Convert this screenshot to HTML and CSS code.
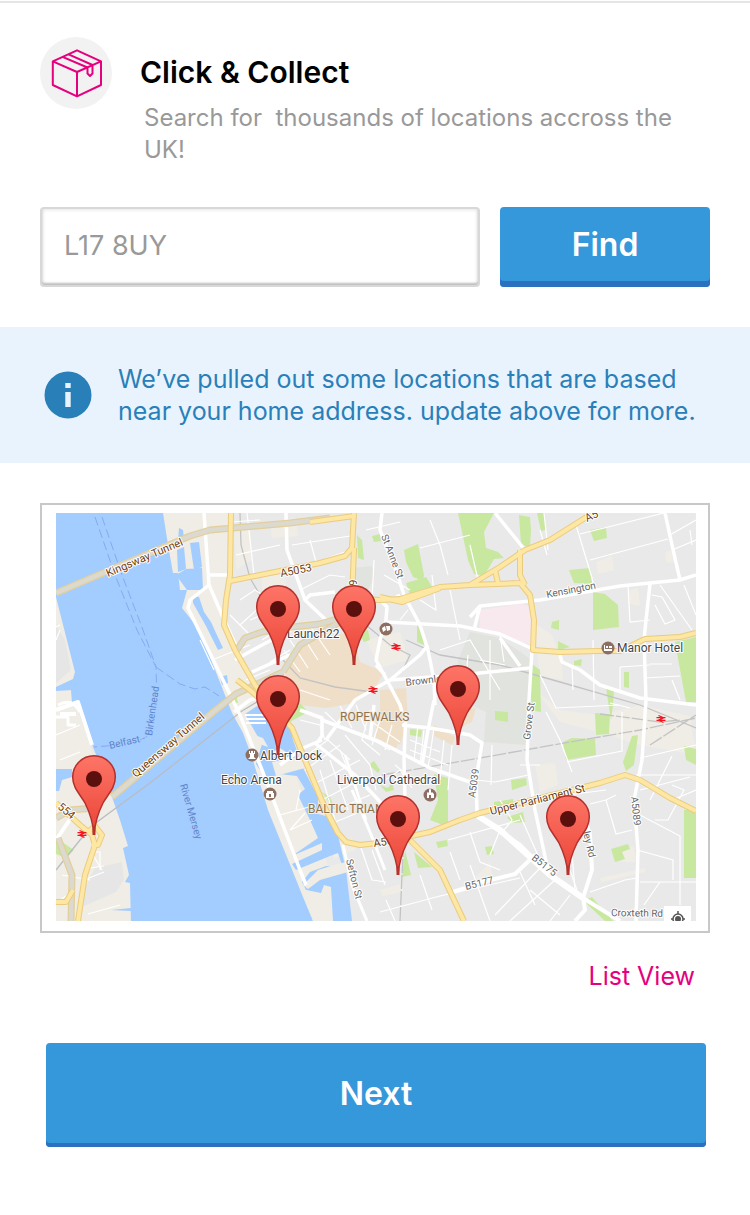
FILE: index.html
```html
<!DOCTYPE html>
<html lang="en">
<head>
<meta charset="utf-8">
<meta name="viewport" content="width=device-width, initial-scale=1">
<title>Click &amp; Collect</title>
<link rel="stylesheet" href="styles.css">
</head>
<body>
<main class="page">
  <header class="intro">
    <span class="intro-icon">
      <svg viewBox="0 0 72 72" aria-hidden="true">
        <path d="M12.800 24.300 37 13.300 61 24.300V48L37 59.300 12.800 48ZM12.800 24.300 37 35 61 24.300M37 35V59.300M22.500 19.800 47.500 30.500M28 17.200 52.500 28M47.500 30.500V36.500L50 39 52.500 36.500V28"/>
      </svg>
    </span>
    <div class="intro-text">
      <h1>Click &amp; Collect</h1>
      <p>Search for&nbsp; thousands of locations accross the UK!</p>
    </div>
  </header>

  <form class="search">
    <input type="text" aria-label="Postcode" placeholder="L17 8UY">
    <button type="button" class="btn btn-find">Find</button>
  </form>

  <section class="notice">
    <svg class="notice-icon" viewBox="0 0 48 48" aria-hidden="true">
      <circle cx="24" cy="24" r="23.500"/>
      <path d="M21.300 12h5.400v5h-5.400zM21.300 21h5.400v15h-5.400z"/>
    </svg>
    <p>We’ve pulled out some locations that are based near your home address. update above for more.</p>
  </section>

  <section class="map-card">
    <svg class="map" viewBox="56 513 640 408" role="img" aria-label="Map of collection points in Liverpool">
      <defs>
        <linearGradient id="pinFill" x1="0" y1="0" x2="0" y2="1">
          <stop offset="0" stop-color="#fd7567"/>
          <stop offset="1" stop-color="#ea4335"/>
        </linearGradient>
        <g id="pin">
          <path d="M0 0C-1-14-4-22-9-32-14-41-21.300-47-21.300-58A21.300 21.300 0 0 1 21.300-58C21.300-47 14-41 9-32 4-22 1-14 0 0Z" fill="url(#pinFill)" stroke="#b3302c" stroke-width="1.500"/>
          <path d="M-1.500 0V-9H1.500V0Z" fill="#b8322d"/>
          <circle cy="-56" r="8" fill="#5c100e"/>
        </g>
        <g id="rail" fill="none" stroke="#f5141e" stroke-width="1.300">
          <path d="M-4.500-1.300H4.500M-4.500 1.300H4.500M-2.500-3.500 2.500-1.300-2.500 1.300 2.500 3.500"/>
        </g>
      </defs>

      <rect x="56" y="513" width="640" height="408" fill="#e9e9e9"/>

      <!-- built-up and shoreline areas -->
      <g fill="#efede5">
        <path d="M160 513H232L228 575 222 625 246 672 262 712 290 760 318 835 346 921H310L228 715 180 610Z"/>
        <path d="M56 597 75 672 73 679 56 687ZM56 691H71L90 745 97 762 112 797 121 822 128 846 131 921H56Z"/>
        <path d="M234 528 250 522 252 560 236 570ZM262 574 285 570 286 590 262 594ZM270 522 296 518 298 536 272 538ZM366 640 400 632 408 660 380 668ZM534 623 552 635 562 660 563 680 540 676ZM535 690 560 710 600 715 640 705 690 716 696 755 640 745 610 735 560 722ZM535 765 555 763 558 785 540 792ZM490 862 493 880 475 878ZM596 562 612 556 614 570 598 574ZM380 890 400 884 404 892 382 896ZM600 878 645 868 645 872 602 882ZM330 845 352 838 356 850 334 858ZM616 850 634 846 636 862 622 862ZM629 590 638 588 640 606 628 604ZM665 552 675 549 676 563 666 562Z"/>
      </g>
      <path fill="#e6e6e6" d="M56 625 65 640 71 670 56 683ZM95 868 122 862 124 880 116 892 84 906 80 898Z"/>
      <path fill="#e1e3de" d="M470 632 500 638 532 660 530 705 528 745 484 742 486 712 460 700 458 660ZM352 568 372 566 374 578 362 602 352 600Z"/>
      <path fill="#f0dfc8" d="M318 638 352 632 360 662 384 672 374 690 350 704 326 708 296 705 288 680 283 665 300 648ZM380 690 406 688 408 720 400 745 380 730ZM376 722 402 735 396 748 376 738ZM434 725 455 737 452 745 434 736ZM460 710 476 708 472 722 460 728Z"/>
      <path fill="#f8e9ef" d="M480 610 520 604 530 606 532 645 505 638 480 630Z"/>

      <g fill="#c8e8a0">
        <path d="M458 513H494L484 532 486 548 498 552 504 558 494 559 484 576 474 574 468 560Z"/>
        <path d="M519 515 530 517 531 530 530 547 521 545ZM537 513H544L546 530 541 531ZM590 530 606 527 607 538 594 541ZM569 570 590 568 592 584 574 583ZM593 592 605 594 618 605 619 627 593 630ZM675 642 696 637V702L686 702ZM624 672H629V688L624 687ZM606 688 614 690 613 705 611 720ZM532 664 540 670 541 712 528 710ZM552 622 559 620V630L551 628ZM574 661 582 659 581 666 574 665ZM558 641 570 647 558 650Z"/>
        <path d="M404 550 418 544 424 575 423 581 413 577 406 562ZM406 583 426 577 434 590 410 595ZM372 536 380 534 381 541 374 542ZM357 535 362 540 364 560 358 558ZM417 625 423 632 424 645 417 642ZM357 630 368 630 370 640 364 642Z"/>
        <path d="M563 742 572 738 595 739 596 755 566 760ZM595 713 610 714 609 734 596 735ZM495 711 508 712 508 722 495 720ZM632 736 638 735 634 765 626 771 623 762ZM511 780 526 778 527 785 512 790ZM494 802 513 799 513 806 494 808ZM507 817 523 812 525 822 512 823ZM684 746 696 749V765L686 760ZM684 810H696V878H684ZM611 849 628 844 630 849 622 852 625 859 615 862ZM585 900 592 897 596 902 613 921H605L588 905ZM485 847 492 846 494 854 487 855Z"/>
        <path d="M410 729 422 730 421 737 410 735ZM369 765 374 761 380 770 378 773ZM380 785 388 788 392 782 394 790 386 792ZM434 774 448 778 448 827 430 820 438 800ZM405 850 411 875 402 877ZM414 852 426 862 432 867 418 868ZM436 842 447 840 448 846 438 848ZM322 792 330 797 336 812ZM284 712 300 703 308 712 290 722Z"/>
        <path d="M56 838 74 850 66 858 56 854ZM230 694 236 694 238 703 232 703Z"/>
      </g>

      <!-- river and docks -->
      <g fill="#a3ccff">
        <path d="M56 513H163L168 545 173 573 178 573 180 590 187 590 182 608 190 618 200 632 212 662 232 713 243 733 252 757 268 810 297 882 303 897 313 921H131L130 883 125 882 129 875 123 848 128 846 120 820 112 797 97 757 93 747 81 710 72 703 71 690 56 691V687L73 679 75 672 56 597Z"/>
        <path d="M56 769H72L72 777 62 780 59 791 56 791ZM111 910 131 908V911Z"/>
        <path d="M179 528 183 530 184 540 178 543ZM177 550 184 547 186 569 178 572ZM190 543 199 542 202 567 194 570ZM176 575 186 569 202 568 203 590 187 590ZM193 596 199 597 204 612 211 622 215 631 223 648 218 650 206 626 193 603ZM220 677 227 675 228 683 222 685Z"/>
        <path d="M245 714 260 704 286 707 293 740 304 770 318 797 318 814 334 818 346 870 352 921H333L328 896 306 890 302 882 310 872 326 866 343 868 338 853 330 856 296 870 292 864 322 850 322 843 292 856 318 838 310 820 298 795 305 789 297 776 280 774 266 779 256 764 262 744Z"/>
      </g>
      <g fill="#efede5">
        <path d="M247 732 263 738 268 747 247 740ZM272 762 303 756 305 768 276 776ZM334 865 346 862 348 872 320 880 308 889 303 885 318 870ZM272 752 280 748 286 752 276 760Z"/>
        <path d="M306 890 321 893 324 885 331 887 333 921H313Z"/>
      </g>
      <path d="M245 715H266M246 719H266M246 723H266" stroke="#fff" stroke-width="2"/>

      <!-- ferry lines -->
      <g fill="none" stroke="#87a9f2" stroke-dasharray="9 4">
        <path d="M95 517 115 575 137 630 156 667 157 700 150 735 132 744 94 747M102 517 122 575 143 630 156 667M156 667 180 684 195 689 205 687 219 696"/>
      </g>

      <!-- railways -->
      <g fill="none" stroke="#c3c3c3" stroke-width="1.300">
        <path d="M56 870 80 840 97 822 150 783 242 711 270 694" stroke="#b9bcc2"/>
        <path d="M240 513 241 545 250 578 260 595 283 615M283 660 300 678 335 687 372 692M360 620 390 645 410 655 402 672M406 640 440 655 500 665 560 682 640 705 696 728"/>
        <path d="M382 775 480 758 570 742 640 730 696 718M400 921 402 875 404 840M600 714 660 722 680 720M650 745 696 715" stroke-dasharray="14 2"/>
      </g>

      <!-- minor streets -->
      <g fill="none" stroke="#fff" stroke-width="1.200">
        <path d="M230 522 260 520M247 513 254 575M236 555 280 545M292 545 350 536M310 540 316 562M300 590 330 575 345 577M262 594 285 590M240 600 255 590 270 600M230 615 250 635M240 625 262 605M318 522 350 515M322 560 345 552"/>
        <path d="M366 530 400 522M420 548 470 535M430 520 440 545 448 575M374 560 372 600M384 575 410 590M420 600 436 610 432 575M450 590 460 640M400 620 408 610"/>
        <path d="M576 525 592 578 594 587M580 534 664 513M590 560 668 539M668 536 696 520M672 550 696 540M690 530 692 545M684 585 696 615M660 585 692 630M628 586 630 622 650 620M652 595 662 597 675 620 665 624 655 605M630 708 610 703M650 664 672 664M620 667 650 665M620 667V690M672 680 680 700M645 678 680 676M593 640 594 700M572 665 573 690M540 675 556 708 620 705M540 530 547 555M544 513 548 550M470 545 478 580"/>
        <path d="M468 655 465 690M480 660 505 665M490 640 490 700M500 635 504 662M440 650 470 640 500 690M546 712 560 740 572 772M622 712V751L567 762M640 758 696 745M492 745 491 785M475 780 495 782 528 775M520 765 540 765M636 775 696 775M650 800 672 756M696 790 672 800M606 800 616 834 632 830M616 795 606 800 590 804M640 815 680 836 680 905M637 850 673 860V880M640 882H696M660 882 644 905M590 892 625 880 637 878M570 870 577 890M640 790 690 777M655 820 668 820 684 790 672 785"/>
        <path d="M300 760 328 740 350 760M305 770 340 745M312 785 360 760M322 800 360 780M330 812 370 795M335 822 370 808M320 770 335 820M330 760 348 810M340 750 360 800M345 735 370 765 376 790M300 720 320 725 325 740M325 712 342 728M340 706 352 728M356 705 366 730M370 710 362 740 380 755M380 720 372 745M392 725 385 750M365 735 390 750M372 722 400 742M385 780 400 770 412 788M395 765 420 785M410 740 440 752M418 725 414 760M424 730 420 765M434 728 428 768M444 740 440 780M410 750 448 765M452 745 448 790"/>
        <path d="M330 700 300 690M284 650 300 672M290 640 308 668M300 632 318 660M310 626 330 655M262 640 285 625M270 662 290 650M250 620 275 610M200 640 214 670M212 660 250 645M246 680 270 670"/>
        <path d="M360 845 372 880 386 882M372 850 385 885M380 912 440 896 520 878M386 900 395 921M420 875 432 910M450 852 460 880M448 840 520 820M470 832 480 862 500 870M490 855 500 830M520 872 535 905M530 890 560 915M540 868 495 915M555 880 510 921M570 895 550 921M470 865 490 921M520 815 540 860M570 830 575 890M528 800 606 790M500 800 512 820 500 835"/>
        <path d="M90 850 102 870M94 852H100V870M84 880 104 872M90 868 104 866M88 914 120 905M60 900 75 890M62 875 90 880M58 810 95 805M56 735 80 725M56 640 60 630M56 627 60 625M70 810 85 830M60 760 80 752M305 813 290 830 312 820M280 815 316 805M300 790 296 810"/>
      </g>

      <!-- secondary streets -->
      <g fill="none" stroke="#fff" stroke-width="3.500" stroke-linejoin="round">
        <path d="M204 513 209 585 222 615 240 655M209 585 190 600 188 608 240 715 262 770 300 870 306 885M209 575H230M286 513 287 550 305 600 326 620 340 625M305 600 310 595 335 592"/>
        <path d="M382 513 380 530 396 570 404 595 420 625 428 650 434 680 435 705M380 600 387 607 386 620 380 640 376 660 388 682 400 705 402 712M386 622 460 626 500 634 535 650M376 665 385 675M392 600 400 595"/>
        <path d="M326 740 355 700 390 680 420 655 428 645M390 680 460 675 530 668M322 740 303 748M303 748 280 765"/>
        <path d="M300 710 322 718 322 736 316 744 355 775 384 806M322 720 380 742 430 768 470 782M406 712 404 760 405 800M370 738 374 705M434 700 428 730 422 765M402 725 430 728 470 735 482 743 476 780 477 812"/>
        <path d="M352 790 370 832 385 870M343 845 352 885 367 921" stroke-width="3"/>
        <path d="M345 755 355 785 366 820" stroke-width="2.500"/>
        <path d="M470 617 480 606 540 600 620 586 680 580 696 575M480 606 474 630M650 584 646 620 644 640 646 700 642 760 634 800 638 850 636 921M665 513 672 545 680 580M532 650 529 700 527 760 535 810 549 875M560 655 562 662 580 670 600 685 640 698 696 705M500 638 520 666M495 513 525 550"/>
        <path d="M478 816 520 845 550 875 583 898 620 921M583 898 592 870 590 835 585 820M583 898 585 910 575 921M470 885 515 874 535 855M453 892 475 885M56 840 75 812M56 710 78 702 92 745M60 714H76" stroke-width="4"/>
        <path d="M478 816 500 830 550 875 583 898" stroke-width="6"/>
        <path d="M235 660 262 645 300 625M252 672 290 655M234 712 250 700 285 690"/>
        <path d="M58 705 Q72 697 80 712M56 717H68V725H76" stroke-width="3"/>
      </g>

      <!-- tunnels -->
      <g fill="none" stroke-linejoin="round">
        <path d="M56 593 190 536 210 530 290 523 330 518M112 797 212 713 236 694 283 672M237 650 245 638 262 632 283 628 320 624 340 618M283 672 300 645 340 622M56 818 70 810 95 808M58 838 72 875 71 921" stroke="#e2cf9b" stroke-width="7"/>
        <path d="M56 593 190 536 210 530 290 523 330 518M112 797 212 713 236 694 283 672M237 650 245 638 262 632 283 628 320 624 340 618M283 672 300 645 340 622M56 818 70 810 95 808M58 838 72 875 71 921" stroke="#dcd9ce" stroke-width="4.500"/>
      </g>

      <!-- main roads -->
      <g fill="none" stroke-linejoin="round">
        <g stroke="#eacb7e" stroke-width="6">
          <path d="M231 513 230 575 226 600 224 625 235 650 255 685 275 710 292 728 305 760 325 808 338 833 346 842 360 845 378 843M230 581 260 575 320 563 345 556 352 548 354 513M354 548 352 600M310 522 354 516M352 598 380 600 400 599 440 587 470 585 520 583 530 595 534 620 533 650 560 652 600 651 620 651 645 639 680 637 696 633M380 597 402 602 440 588M470 585 500 567 525 550 550 540 585 518 595 513M520 550 520 575 525 585M495 570 498 583M378 843 430 832 460 820 480 813 540 798 600 783 625 775 640 780 670 798 696 811M405 835 425 855 440 870 464 921"/>
          <path d="M56 803 80 825 92 835 95 845 85 875 78 921M88 832 95 826 102 835 98 845 92 845M56 902 66 902 73 890M237 680 250 690 270 708"/>
        </g>
        <g stroke="#fde7a3" stroke-width="4">
          <path d="M231 513 230 575 226 600 224 625 235 650 255 685 275 710 292 728 305 760 325 808 338 833 346 842 360 845 378 843M230 581 260 575 320 563 345 556 352 548 354 513M354 548 352 600M310 522 354 516M352 598 380 600 400 599 440 587 470 585 520 583 530 595 534 620 533 650 560 652 600 651 620 651 645 639 680 637 696 633M380 597 402 602 440 588M470 585 500 567 525 550 550 540 585 518 595 513M520 550 520 575 525 585M495 570 498 583M378 843 430 832 460 820 480 813 540 798 600 783 625 775 640 780 670 798 696 811M405 835 425 855 440 870 464 921"/>
          <path d="M56 803 80 825 92 835 95 845 85 875 78 921M88 832 95 826 102 835 98 845 92 845M56 902 66 902 73 890M237 680 250 690 270 708"/>
        </g>
      </g>

      <use href="#rail" x="396" y="647"/>
      <use href="#rail" x="373" y="690"/>
      <use href="#rail" x="661" y="719"/>
      <use href="#rail" x="82" y="834"/>

      <g fill="#8d6e63">
        <circle cx="386" cy="629" r="6.500"/><circle cx="608" cy="648" r="6.500"/><circle cx="252" cy="755" r="6.500"/><circle cx="270" cy="794" r="6.500"/><circle cx="430" cy="795" r="6.500"/>
      </g>
      <g fill="#fff">
        <path d="M382 628 385 626 386 630 383 632ZM386 626H390V630L387 631ZM604 645H605V649H612V651H604ZM606 646H608V648H606ZM609 646H612V648H609ZM249 751H250V753H251V751H253V753H254V751H255V754H254V757L256 759H248L250 757V754H249ZM266 793H267V791H273V793H274V798H266ZM427 797V793L428 792 429 793V790L430 788 431 790V793L432 792 434 794V798H431V795H429V798H427Z"/>
      </g>
      <path d="M270 794V797" stroke="#8d6e63" stroke-width="2"/>

      <g class="label label-place">
        <text x="287" y="638">Launch22</text>
        <text x="617" y="652">Manor Hotel</text>
        <text x="260" y="760">Albert Dock</text>
        <text x="221" y="784">Echo Arena</text>
        <text x="337" y="784">Liverpool Cathedral</text>
      </g>
      <g class="label label-district">
        <text x="340" y="721">ROPEWALKS</text>
        <text x="308" y="813">BALTIC TRIANGLE</text>
      </g>
      <g class="label label-route">
        <text transform="translate(108 577) rotate(-23)">Kingsway Tunnel</text>
        <text transform="translate(136 778) rotate(-41)">Queensway Tunnel</text>
        <text transform="translate(281 577) rotate(-11)">A5053</text>
        <text transform="translate(357 599) rotate(-90)">A59</text>
        <text transform="translate(587 522) rotate(-25)">A5</text>
        <text transform="translate(57 808) rotate(39)">554</text>
        <text transform="translate(374 847) rotate(-8)">A56</text>
        <text transform="translate(491 815) rotate(-14)">Upper Parliament St</text>
      </g>
      <g class="label label-street">
        <text transform="translate(381 536) rotate(69)">St Anne St</text>
        <text transform="translate(547 598) rotate(-11)">Kensington</text>
        <text transform="translate(406 686) rotate(-7)">Brownlow</text>
        <text transform="translate(530 740) rotate(-83)">Grove St</text>
        <text transform="translate(475 798) rotate(-82)">A5039</text>
        <text transform="translate(631 797) rotate(84)">A5089</text>
        <text transform="translate(531 859) rotate(38)">B5175</text>
        <text transform="translate(466 890) rotate(-14)">B5177</text>
        <text transform="translate(583 832) rotate(77)">ley Rd</text>
        <text transform="translate(346 860) rotate(76)">Sefton St</text>
        <text transform="translate(611 916) rotate(1)">Croxteth Rd</text>
      </g>
      <g class="label label-water">
        <text transform="translate(110 749) rotate(-13)">Belfast -</text>
        <text transform="translate(152 736) rotate(-82)">Birkenhead</text>
        <text transform="translate(180 785) rotate(74)">River Mersey</text>
      </g>

      <rect x="664" y="906" width="27" height="15" fill="#fff"/>
      <g fill="none" stroke="#555" stroke-width="1.500">
        <circle cx="678" cy="919" r="5"/><path d="M678 911V914M671 919H673M683 919H685"/>
      </g>
      <circle cx="678" cy="919" r="3" fill="#555"/>

      <use href="#pin" x="278" y="665"/>
      <use href="#pin" x="354" y="665"/>
      <use href="#pin" x="278" y="755"/>
      <use href="#pin" x="458" y="745"/>
      <use href="#pin" x="94" y="835"/>
      <use href="#pin" x="398" y="875"/>
      <use href="#pin" x="568" y="875"/>
    </svg>
  </section>

  <p class="view-switch"><a href="#list">List View</a></p>

  <div class="actions">
    <button type="button" class="btn btn-next">Next</button>
  </div>
</main>
</body>
</html>
```
FILE: styles.css
```css
* {
  box-sizing: border-box;
}

body {
  margin: 0;
  background: #fff;
  font-family: Inter, "Liberation Sans", sans-serif;
  font-size: 25px;
  line-height: 32px;
}

h1,
p {
  margin: 0;
}

.page {
  margin-top: 1px;
  border-top: 2px solid #e5e5e5;
}

.intro {
  display: flex;
  align-items: flex-start;
  gap: 28px;
  padding: 34px 40px 0;
}

.intro-icon {
  flex: none;
  width: 72px;
  height: 72px;
  border-radius: 50%;
  background: #f2f2f2;
}

.intro-icon svg {
  display: block;
  fill: none;
  stroke: #e5007e;
  stroke-width: 2;
  stroke-linejoin: round;
}

.intro h1 {
  padding-top: 15px;
  font-size: 30px;
  font-weight: 600;
  line-height: 40px;
  color: #000;
}

.intro p {
  padding: 10px 0 0 4px;
  font-size: 24px;
  color: #999;
}

.search {
  display: grid;
  grid-template-columns: 1fr 210px;
  gap: 20px;
  padding: 41px 40px 40px;
}

.search input {
  min-width: 0;
  height: 80px;
  padding: 0 22px 4px;
  border: 2px solid #d8d8d8;
  border-radius: 4px;
  background: #fff;
  box-shadow: inset 0 -2px 2px #c0c0c0, inset 0 0 4px #d8d8d8;
  font: inherit;
  font-size: 27px;
  color: #333;
}

.search input::placeholder {
  color: #999;
  opacity: 1;
}

.btn {
  border: 0;
  border-radius: 4px;
  background: #3498db;
  font: inherit;
  font-size: 32px;
  font-weight: 600;
  color: #fff;
  cursor: pointer;
}

.btn-find {
  padding: 0 0 4px;
  box-shadow: inset 0 -6px #2c71c0;
}

.btn-next {
  width: 100%;
  height: 104px;
  padding: 0 0 2px;
  box-shadow: inset 0 -4px #2c71c0;
}

.notice {
  display: flex;
  align-items: center;
  gap: 26px;
  padding: 36px 40px 36px 44px;
  background: #e9f3fe;
  color: #2980b9;
}

.notice-icon {
  flex: none;
  width: 48px;
  height: 48px;
  fill: #2980b9;
}

.notice-icon path {
  fill: #e9f3fe;
}

.map-card {
  margin: 40px 40px 0;
  padding: 8px 12px 10px 14px;
  border: 2px solid #c8c8c8;
}

.map {
  display: block;
  width: 100%;
}

.label {
  font-family: Roboto, sans-serif;
  font-size: 12px;
  stroke: #fff;
  stroke-width: 2px;
  stroke-linejoin: round;
  paint-order: stroke;
}

.label-place {
  fill: #444;
}

.label-district {
  fill: #8f7350;
  stroke: #f4ece0;
}

.label-route {
  font-size: 11px;
  fill: #6f3c0b;
}

.label-street {
  font-size: 10px;
  fill: #666;
}

.label-water {
  font-size: 10px;
  fill: #5d84cc;
  stroke: #a3ccff;
}

.view-switch {
  padding: 27px 55px 0;
  text-align: right;
}

.view-switch a {
  color: #e5007e;
  text-decoration: none;
}

.actions {
  padding: 51px 44px 68px 46px;
}
```
